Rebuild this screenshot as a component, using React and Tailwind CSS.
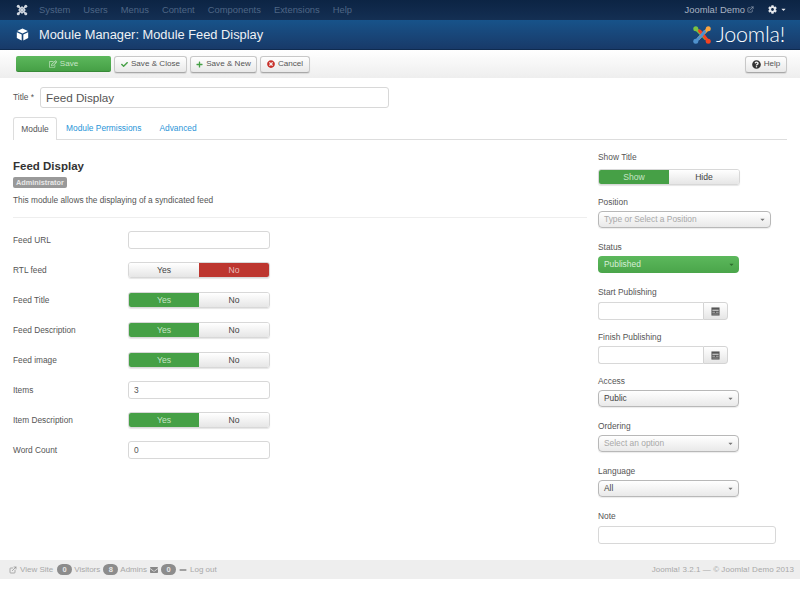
import React from "react";
import { FaCheck, FaPlus, FaTimesCircle, FaQuestionCircle, FaRegEdit, FaCog, FaCaretDown, FaEnvelope, FaMinus } from "react-icons/fa";
import { FiExternalLink } from "react-icons/fi";

const menu = ["System", "Users", "Menus", "Content", "Components", "Extensions", "Help"];

const JoomlaMark = ({ className }) => (
    <svg viewBox="0 0 24 24" className={className}>
        <g fill="none" strokeWidth="3.6" strokeLinecap="round">
            <path d="M5 5 L12 12 L16 16" stroke="#7ac143" />
            <path d="M19 5 L12 12 L8 16" stroke="#f9a541" />
            <path d="M19 19 L12 10 L9 7" stroke="#f44321" />
            <path d="M5 19 L12 12 L15 8" stroke="#5091cd" />
        </g>
        <circle cx="4.5" cy="4.5" r="3" fill="#7ac143" />
        <circle cx="19.5" cy="4.5" r="3" fill="#f9a541" />
        <circle cx="19.5" cy="19.5" r="3" fill="#f44321" />
        <circle cx="4.5" cy="19.5" r="3" fill="#5091cd" />
    </svg>
);

const WhiteMark = () => (
    <svg viewBox="0 0 24 24" className="w-[12px] h-[12px]">
        <g fill="none" stroke="#cfd6df" strokeLinecap="round">
            <path d="M5 5 L19 19" strokeWidth="3.4" />
            <path d="M19 5 L5 19" strokeWidth="3.4" />
            <path d="M6 12 L12 6 L18 12 L12 18 Z" strokeWidth="2.6" />
        </g>
        <circle cx="4.5" cy="4.5" r="3" fill="#cfd6df" />
        <circle cx="19.5" cy="4.5" r="3" fill="#cfd6df" />
        <circle cx="19.5" cy="19.5" r="3" fill="#cfd6df" />
        <circle cx="4.5" cy="19.5" r="3" fill="#cfd6df" />
    </svg>
);

const CubeIcon = () => (
    <svg viewBox="0 0 24 24" className="w-[13px] h-[13px]" fill="#fff">
        <path d="M12 1 L22 5.5 L12 10 L2 5.5 Z" />
        <path d="M1.5 8 L10.5 12 L10.5 23 L1.5 18.5 Z" />
        <path d="M22.5 8 L13.5 12 L13.5 23 L22.5 18.5 Z" />
    </svg>
);

const CalendarIcon = () => (
    <svg viewBox="0 0 10 10" className="w-[9px] h-[9px]">
        <rect x="0.5" y="0.5" width="9" height="9" fill="#555" />
        <rect x="1.5" y="3" width="7" height="1.2" fill="#d8d8d8" />
        <rect x="1.5" y="5.3" width="3" height="1" fill="#bbb" />
        <rect x="5.5" y="5.3" width="3" height="1" fill="#bbb" />
        <rect x="1.5" y="7.3" width="7" height="1" fill="#999" />
    </svg>
);

const ToolButton = ({ icon, children, className }) => (
    <button className={`h-[17px] flex items-center justify-center gap-[3px] rounded-[3px] border border-[#c8c8c8] border-b-[#a8a8a8] bg-gradient-to-b from-white to-[#e8e8e8] text-[8.1px] text-[#555] shadow-[0_1px_1px_rgba(0,0,0,0.1)] ${className}`}>
        {icon}
        {children}
    </button>
);

const Toggle = ({ left = "Yes", right = "No", active = "left", activeColor = "bg-[#46a046]" }) => (
    <div className="w-[142px] h-[16px] flex text-[8.6px] rounded-[3px] border border-[#d8d8d8] shadow-[0_1px_1px_rgba(0,0,0,0.1)] overflow-hidden">
        <div className={`w-1/2 flex items-center justify-center ${active === "left" ? `${activeColor} text-[#c5e4c5]` : "bg-gradient-to-b from-white to-[#e6e6e6] text-[#444]"}`}>{left}</div>
        <div className={`w-1/2 flex items-center justify-center ${active === "right" ? `${activeColor} text-[#e8bcb8]` : "bg-gradient-to-b from-white to-[#e6e6e6] text-[#444]"}`}>{right}</div>
    </div>
);

const TextInput = ({ value, className }) => (
    <div className={`h-[18px] flex items-center px-[5px] bg-white border border-[#d8d8d8] rounded-[3px] text-[8.4px] text-[#555] ${className}`}>{value}</div>
);

const Select = ({ value, muted, className = "w-[141px]" }) => (
    <div className={`h-[17px] flex items-center justify-between pl-[5px] pr-[4px] rounded-[4px] border border-[#b8b8b8] bg-gradient-to-b from-white to-[#e9e9e9] shadow-[0_1px_1px_rgba(0,0,0,0.08)] text-[8.4px] ${muted ? "text-[#a8a8a8]" : "text-[#444]"} ${className}`}>
        {value}
        <FaCaretDown className="w-[7px] h-[7px] text-[#777]" />
    </div>
);

const DateInput = () => (
    <div className="w-[130px] h-[18px] flex">
        <div className="w-[105px] bg-white border border-[#d8d8d8] border-r-0 rounded-l-[3px]" />
        <div className="w-[25px] flex items-center justify-center bg-gradient-to-b from-white to-[#e6e6e6] border border-[#d4d4d4] rounded-r-[3px]">
            <CalendarIcon />
        </div>
    </div>
);

const Row = ({ label, children }) => (
    <div className="h-[30px] flex items-center">
        <div className="w-[115px] text-[8.3px] text-[#555]">{label}</div>
        {children}
    </div>
);

const Field = ({ label, children, className, gap = "mb-[3px]" }) => (
    <div className={className}>
        <div className={`text-[8.4px] leading-[11px] text-[#555] ${gap}`}>{label}</div>
        {children}
    </div>
);

const Badge = ({ children }) => (
    <span className="w-[15px] h-[11px] flex items-center justify-center rounded-full bg-[#8c8c8c] text-[#e8e8e8] text-[7.5px] font-bold">{children}</span>
);

const App = () => {
    return (
        <div className="w-[800px] h-[599px] bg-white overflow-hidden font-['Liberation_Sans',Arial,sans-serif]">
            {/* top nav */}
            <div className="h-[20px] flex items-center bg-gradient-to-b from-[#0c2444] to-[#142f53] pl-[16px] pr-[13px]">
                <WhiteMark />
                <div className="flex ml-[11px] gap-[13px] text-[9.4px] text-[#4e6685]">
                    {menu.map((m) => <span key={m}>{m}</span>)}
                </div>
                <div className="ml-auto flex items-center text-[9.4px] text-[#a9b3c1]">
                    Joomla! Demo
                    <FiExternalLink className="w-[7px] h-[7px] ml-[2px]" />
                    <FaCog className="w-[9px] h-[9px] ml-[14px] text-[#e4e7ec]" />
                    <FaCaretDown className="w-[7px] h-[7px] ml-[3px] text-[#e4e7ec]" />
                </div>
            </div>

            {/* title bar */}
            <div className="h-[29px] flex items-center bg-gradient-to-b from-[#17538a] to-[#183a69] pl-[16px] pr-[15px] border-b border-[#0f2b50] box-content">
                <CubeIcon />
                <h1 className="ml-[10px] text-[12.85px] text-[#eef1f5]">Module Manager: Module Feed Display</h1>
                <div className="ml-auto flex items-center">
                    <JoomlaMark className="w-[20px] h-[20px]" />
                    <span className="ml-[4px] text-[21.5px] leading-none font-['Lato',sans-serif] font-light tracking-[-0.2px] text-white">Joomla!</span>
                </div>
            </div>

            {/* toolbar */}
            <div className="h-[28px] flex items-center px-[13px] pl-[16px] bg-gradient-to-b from-white to-[#eeeeee]">
                <button className="w-[95px] h-[16px] pt-[1px] flex items-center justify-center gap-[3px] rounded-[2px] bg-gradient-to-b from-[#5cb85c] to-[#46a046] border-b border-[#388a38] text-[8.1px] text-[#c5e4c5]">
                    <FaRegEdit className="w-[8px] h-[8px]" />
                    Save
                </button>
                <ToolButton className="ml-[3px] w-[73px]" icon={<FaCheck className="w-[7px] h-[7px] text-[#46a046]" />}>Save &amp; Close</ToolButton>
                <ToolButton className="ml-[3px] w-[67px]" icon={<FaPlus className="w-[7px] h-[7px] text-[#46a046]" />}>Save &amp; New</ToolButton>
                <ToolButton className="ml-[3px] w-[50px]" icon={<FaTimesCircle className="w-[8px] h-[8px] text-[#c8302a]" />}>Cancel</ToolButton>
                <ToolButton className="ml-auto w-[42px]" icon={<FaQuestionCircle className="w-[9px] h-[9px] text-[#333]" />}>Help</ToolButton>
            </div>

            <div className="h-[482px] px-[13px]">
                {/* title */}
                <div className="pt-[9px] flex items-center">
                    <div className="w-[27px] text-[8.4px] text-[#555]">Title *</div>
                    <div className="w-[349px] h-[21px] flex items-center px-[5px] bg-white border border-[#d8d8d8] rounded-[3px] text-[11.7px] text-[#555]">Feed Display</div>
                </div>

                {/* tabs */}
                <div className="mt-[9px] h-[23px] flex border-b border-[#dddddd] text-[8.4px]">
                    <div className="w-[44px] h-[23px] flex items-center justify-center bg-white border border-[#dddddd] border-b-0 rounded-t-[3px] text-[#555]">Module</div>
                    <div className="ml-[9px] flex items-center text-[#2a95d8]">Module Permissions</div>
                    <div className="ml-[18px] flex items-center text-[#2a95d8]">Advanced</div>
                </div>

                <div className="flex">
                    {/* left column */}
                    <div className="w-[574px]">
                        <h2 className="mt-[19px] text-[11.5px] leading-[14px] font-bold text-[#333]">Feed Display</h2>
                        <div className="w-fit mt-[4px] px-[3px] h-[11px] leading-[11px] rounded-[2px] bg-[#999999] text-[7.3px] font-bold text-[#e8e8e8]">Administrator</div>
                        <p className="mt-[6px] text-[8.3px] leading-[12px] text-[#555]">This module allows the displaying of a syndicated feed</p>
                        <div className="mt-[11px] mb-[7px] border-t border-[#eeeeee]" />
                        <Row label="Feed URL"><TextInput className="w-[142px]" /></Row>
                        <Row label="RTL feed"><Toggle active="right" activeColor="bg-[#bd362f]" /></Row>
                        <Row label="Feed Title"><Toggle /></Row>
                        <Row label="Feed Description"><Toggle /></Row>
                        <Row label="Feed image"><Toggle /></Row>
                        <Row label="Items"><TextInput className="w-[142px]" value="3" /></Row>
                        <Row label="Item Description"><Toggle /></Row>
                        <Row label="Word Count"><TextInput className="w-[142px]" value="0" /></Row>
                    </div>

                    {/* right column */}
                    <div className="ml-[11px] pt-[12px]">
                        <Field label="Show Title" gap="mb-[6px]"><Toggle left="Show" right="Hide" /></Field>
                        <Field label="Position" className="mt-[12px]"><Select value="Type or Select a Position" muted className="w-[173px]" /></Field>
                        <Field label="Status" className="mt-[14px]">
                            <div className="w-[141px] h-[17px] flex items-center justify-between pl-[6px] pr-[4px] rounded-[4px] bg-gradient-to-b from-[#5cb85c] to-[#4aa54a] text-[8.4px] text-[#d8efd8]">
                                Published
                                <FaCaretDown className="w-[7px] h-[7px] text-[#2f6f2f]" />
                            </div>
                        </Field>
                        <Field label="Start Publishing" className="mt-[14px]" gap="mb-[4px]"><DateInput /></Field>
                        <Field label="Finish Publishing" className="mt-[12px]"><DateInput /></Field>
                        <Field label="Access" className="mt-[12px]"><Select value="Public" /></Field>
                        <Field label="Ordering" className="mt-[14px]"><Select value="Select an option" muted /></Field>
                        <Field label="Language" className="mt-[14px]"><Select value="All" /></Field>
                        <Field label="Note" className="mt-[14px]" gap="mb-[4px]"><TextInput className="w-[178px]" /></Field>
                    </div>
                </div>
            </div>

            {/* status bar */}
            <div className="h-[19px] flex items-center pl-[9px] pr-[6px] bg-[#eeeeee] text-[8px] text-[#a8a8a8]">
                <FiExternalLink className="w-[8px] h-[8px] text-[#888]" />
                <span className="ml-[3px]">View Site</span>
                <span className="ml-[4px]"><Badge>0</Badge></span>
                <span className="ml-[2px]">Visitors</span>
                <span className="ml-[3px]"><Badge>8</Badge></span>
                <span className="ml-[2px]">Admins</span>
                <FaEnvelope className="ml-[3px] w-[8px] h-[8px] text-[#888]" />
                <span className="ml-[3px]"><Badge>0</Badge></span>
                <FaMinus className="ml-[3px] w-[8px] h-[8px] text-[#888]" />
                <span className="ml-[3px]">Log out</span>
                <span className="ml-auto tracking-[0.06px]">Joomla! 3.2.1 — © Joomla! Demo 2013</span>
            </div>
        </div>
    );
};

export default App;
